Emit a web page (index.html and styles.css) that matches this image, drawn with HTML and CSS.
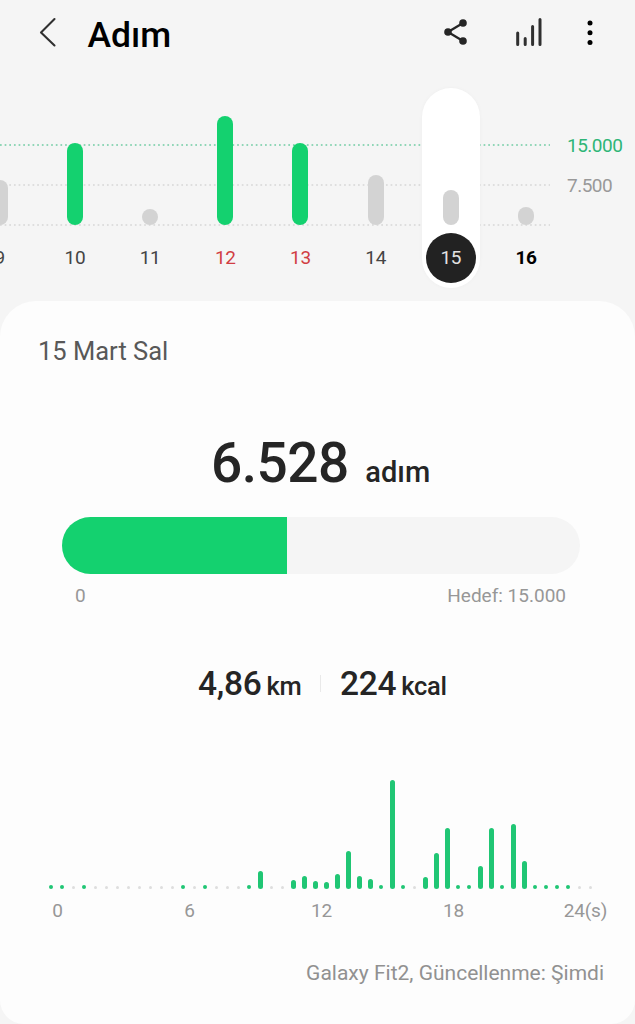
FILE: index.html
```html
<!DOCTYPE html>
<html lang="tr">
<head>
<meta charset="utf-8">
<title>Adım</title>
<link rel="stylesheet" href="styles.css">
</head>
<body>
<header class="topbar">
  <svg class="back" width="18" height="32" viewBox="0 0 18 32"><path d="M15.5 3 L2 16.5 L15.5 29.5"/></svg>
  <h1 class="title">Adım</h1>
  <div class="actions">
    <svg class="share" width="26" height="28" viewBox="0 0 26 28"><path d="M20 5 L5 14 L20 23"/><circle cx="20" cy="5" r="3.8"/><circle cx="5" cy="14" r="3.8"/><circle cx="20" cy="23" r="3.8"/></svg>
    <svg class="levels" width="28" height="30" viewBox="0 0 28 30"><path d="M2.7 16v11.5M10.2 21.5v6M17.6 9.5v18M25 2.5v25"/></svg>
    <svg class="more" width="6" height="26" viewBox="0 0 6 26"><circle cx="3" cy="3" r="2.5"/><circle cx="3" cy="12.8" r="2.5"/><circle cx="3" cy="22.6" r="2.5"/></svg>
  </div>
</header>
<section class="week">
  <svg class="gridlines" width="550" height="84" viewBox="0 0 550 84"><path class="goal" d="M0 2H550"/><path d="M0 42H550M0 82H550"/></svg>
  <div class="days">
    <div class="day"><div class="plot"><i class="bar" style="height:45px"></i></div><span class="date">9</span></div>
    <div class="day"><div class="plot"><i class="bar met" style="height:82px"></i></div><span class="date">10</span></div>
    <div class="day"><div class="plot"><i class="bar" style="height:16px"></i></div><span class="date">11</span></div>
    <div class="day"><div class="plot"><i class="bar met" style="height:109px"></i></div><span class="date holiday">12</span></div>
    <div class="day"><div class="plot"><i class="bar met" style="height:82px"></i></div><span class="date holiday">13</span></div>
    <div class="day"><div class="plot"><i class="bar" style="height:50px"></i></div><span class="date">14</span></div>
    <div class="day selected"><div class="plot"><i class="bar" style="height:35px"></i></div><span class="date">15</span></div>
    <div class="day"><div class="plot"><i class="bar" style="height:18px"></i></div><span class="date today">16</span></div>
  </div>
  <div class="scale"><span class="scale-goal">15.000</span><span>7.500</span></div>
</section>
<main class="card">
  <h2 class="day-title">15 Mart Sal</h2>
  <p class="total"><span class="count">6.528</span><span class="unit">adım</span></p>
  <div class="progress"><div class="fill"></div></div>
  <div class="range"><span>0</span><span>Hedef: 15.000</span></div>
  <div class="stats">
    <span class="stat distance">4,86 <small>km</small></span>
    <i class="divider"></i>
    <span class="stat calories">224 <small>kcal</small></span>
  </div>
  <div class="hours" id="hours"></div>
  <div class="axis"><span>0</span><span>6</span><span>12</span><span>18</span><span class="last">24(s)</span></div>
  <p class="source">Galaxy Fit2, Güncellenme: Şimdi</p>
</main>
<script src="chart.js"></script>
</body>
</html>
```
FILE: styles.css
```css
* { box-sizing: border-box; }
body {
  margin: 0;
  width: 635px;
  height: 1024px;
  overflow: hidden;
  background: #f5f5f5;
  color: #252525;
  font-family: Roboto, sans-serif;
}
h1, h2, p { margin: 0; font-weight: 400; }
svg { display: block; flex: none; }

.topbar { display: flex; align-items: center; height: 66px; padding-left: 39px; }
.back { margin-bottom: 2px; }
.back path { fill: none; stroke: #303030; stroke-width: 2.1; stroke-linecap: round; stroke-linejoin: round; }
.title { margin-left: 30.5px; padding-top: 3px; font-size: 35.5px; font-weight: 500; line-height: 44px; color: #000; }
.actions { display: flex; align-items: center; margin-left: auto; padding-right: 42px; }
.share { margin-right: 46px; margin-bottom: 2px; fill: #252525; }
.share path { fill: none; stroke: #252525; stroke-width: 2.3; }
.levels { margin-right: 44px; margin-bottom: 2px; }
.levels path { stroke: #303030; stroke-width: 3; stroke-linecap: round; }
.more { margin-bottom: 1px; fill: #000; }

.week { position: relative; display: flex; height: 235px; padding-top: 22px; }
.gridlines { position: absolute; left: 0; top: 77px; }
.gridlines path { stroke: #d6d6d6; stroke-width: 1.5; stroke-dasharray: 1.7 2.95; }
.gridlines .goal { stroke: #6fcba2; }
.days {
  position: relative;
  display: grid;
  flex: none;
  grid-template-columns: repeat(8, 75.2px);
  width: 602px;
  margin-left: -37.9px;
}
.day { display: flex; flex-direction: column; align-items: center; width: 58px; height: 200px; justify-self: center; }
.plot { display: flex; align-items: flex-end; height: 137px; }
.bar { display: block; width: 16px; border-radius: 8px; background: #d3d3d3; }
.bar.met { background: #14d16f; }
.date {
  width: 50px;
  height: 50px;
  margin-top: 8px;
  border-radius: 50%;
  color: #444;
  font-size: 19px;
  letter-spacing: -0.3px;
  line-height: 50px;
  text-align: center;
}
.holiday { color: #d13d43; }
.today { color: #000; font-weight: 700; }
.selected { border-radius: 29px; background: #fff; box-shadow: 0 0 4px rgba(0, 0, 0, .03); }
.selected .date { background: #222; color: #e2e2e2; }
.scale { display: flex; flex-direction: column; padding: 38px 0 0 2.9px; color: #999; font-size: 19px; letter-spacing: -0.5px; line-height: 40px; }
.scale-goal { color: #2eb577; }

.card { height: 723px; padding: 34px 31px 0 38px; border-radius: 36px 36px 24px 24px; background: #fdfdfd; }
.day-title { color: #585858; font-size: 25.5px; line-height: 32px; }
.total { display: flex; align-items: baseline; height: 70px; margin-top: 61px; padding-left: 173px; line-height: 70px; font-weight: 500; }
.count { font-size: 55px; letter-spacing: -0.5px; }
.unit { margin-left: 16.5px; font-size: 29px; }
.progress { width: 518px; height: 57px; margin: 19px 0 0 24px; overflow: hidden; border-radius: 29px; background: #f5f5f5; }
.fill { width: 43.5%; height: 100%; background: #14d16f; }
.range { display: flex; justify-content: space-between; padding: 10px 38px 0 37px; color: #979797; font-size: 19px; line-height: 24px; }
.stats { display: flex; align-items: center; height: 40px; margin-top: 57px; padding-left: 160px; font-weight: 500; }
.stat { font-size: 33.5px; letter-spacing: -0.3px; line-height: 40px; white-space: nowrap; }
.stat small { margin-left: -3px; font-size: 25.5px; }
.distance { width: 122px; }
.calories { margin-left: 19px; }
.divider { width: 1px; height: 17px; margin-bottom: 4px; background: #e9e9e9; }
.hours { display: grid; grid-template-columns: repeat(50, 11px); align-items: end; justify-items: center; width: 550px; height: 109px; margin: 75px 0 0 7.5px; }
.hour { width: 5px; border-radius: 3px; background: #20c674; }
.hour.active { width: 4px; height: 4px; }
.hour.empty { width: 3px; height: 3px; background: #dedede; }
.axis { display: grid; grid-template-columns: repeat(5, 132px); width: 530px; margin: 10px 0 0 -46.5px; color: #979797; font-size: 19px; letter-spacing: -0.2px; line-height: 24px; text-align: center; }
.source { margin-top: 37px; color: #919191; font-size: 21px; line-height: 26px; text-align: right; }
```
FILE: chart.js
```js
// Step bars per half hour: 0 = no data, 4 = minimal activity, larger = bar height.
const values = [
  4, 4, 0, 4, 0, 0, 0, 0, 0, 0, 0, 0, 4, 0, 4, 0, 0, 0, 4, 18, 0, 0, 9, 13, 8,
  7, 15, 38, 13, 10, 4, 109, 4, 0, 12, 36, 61, 4, 4, 23, 61, 4, 65, 28, 4, 4, 4, 4, 0, 0
];
const chart = document.getElementById('hours');
for (const value of values) {
  const bar = document.createElement('i');
  bar.className = 'hour' + (value === 0 ? ' empty' : value === 4 ? ' active' : '');
  if (value > 4) bar.style.height = value + 'px';
  chart.appendChild(bar);
}
```
